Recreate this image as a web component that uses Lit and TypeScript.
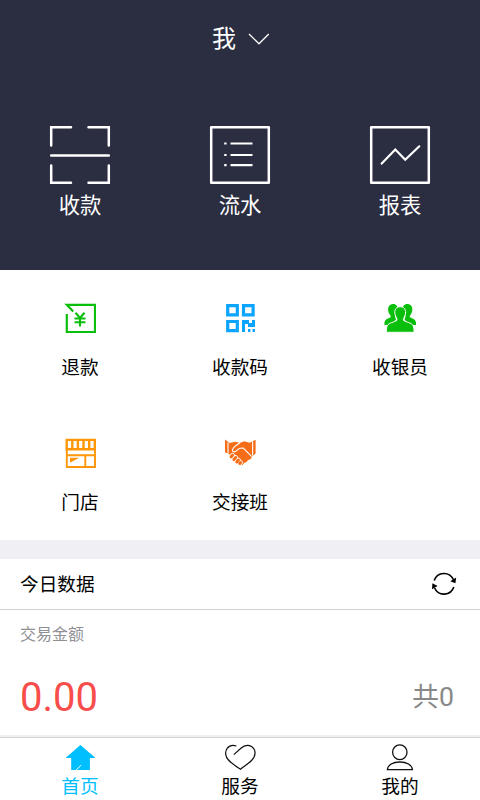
import { LitElement, html, css, svg } from "lit";
import { customElement } from "lit/decorators.js";

const scanIcon = svg`<svg width="62" height="60" viewBox="0 0 62 60" fill="none" stroke="#fff" stroke-width="2.5" stroke-linecap="round">
  <path d="M2.2 20.5V2.2H22M39.5 2.2H59.8V20.5M2.2 40.5V57.8H22M39.5 57.8H59.8V40.5M2.2 30.5H59.8"/></svg>`;
const listIcon = svg`<svg width="62" height="60" viewBox="0 0 62 60" fill="none" stroke="#fff" stroke-width="2.5" stroke-linejoin="round">
  <path d="M2.2 2.2H59.8V57.8H2.2Z"/><path stroke-width="2.2" d="M21.5 18.5H43.5M21.5 30H43.5M21.5 40.2H43.5M15.2 18.5H17.6M15.2 30H17.6M15.2 40.2H17.6"/></svg>`;
const chartIcon = svg`<svg width="62" height="60" viewBox="0 0 62 60" fill="none" stroke="#fff" stroke-width="2.5" stroke-linejoin="round">
  <path d="M2.2 2.2H59.8V57.8H2.2Z"/><path stroke-width="2.2" stroke-linecap="round" stroke-linejoin="miter" d="M12.7 38.6L26.3 24.5L36.2 34.8L50.3 21.3"/></svg>`;

const refundIcon = svg`<svg width="32" height="32" viewBox="0 0 32 32" fill="none" stroke="#0abf0c" stroke-width="2.2">
  <path d="M2.8 12V30H31V2.8H2.8L9.2 9.5"/><path stroke-width="2.1" d="M11.5 10.8L16 16L20.5 10.8M16 16V24.5M10.5 16.5H21.5M10.5 20.2H21.5"/></svg>`;
const qrIcon = svg`<svg width="32" height="32" viewBox="0 0 32 32" fill="none" stroke="#0ba5ff" stroke-width="3.2">
  <path d="M3.7 3.7H13.3V12.9H3.7ZM19.5 3.7H29.1V12.9H19.5ZM3.7 19.5H13.3V28.7H3.7Z"/>
  <path fill="#0ba5ff" stroke="none" d="M18 18H25V21H28V18H31V25H24V22H21V30H18ZM24 27H26.4V30H24ZM28.5 27H31V30H28.5Z"/></svg>`;
const peopleIcon = svg`<svg width="34" height="32" viewBox="0 0 34 32" fill="#0abf0c">
  <path d="M9.5 2C13 1.6 15.2 4.2 14.9 8C14.7 10.5 13 12.5 11.8 14L13 17.5L8 23H1.5C1.1 18.2 3 17.2 7.3 15.5C8.3 15 7.6 13.7 6.6 12.2C4 8.2 4.8 2.6 9.5 2ZM25 2C21.5 1.6 19.3 4.2 19.6 8C19.8 10.5 21.5 12.5 22.7 14L21.5 17.5L26.5 23H33C33.4 18.2 31.5 17.2 27.2 15.5C26.2 15 26.9 13.7 27.9 12.2C30.5 8.2 29.7 2.6 25 2Z"/>
  <path stroke="#fff" stroke-width="1" d="M17.2 4.7C11.6 4.7 10.8 10.2 12.7 14.2C13.5 16 14.3 17 14 18.1C13.3 19.7 7.5 20.2 5 22.6C3.4 24.4 3.4 27.2 3.3 30.3H31.1C31 27.2 31 24.4 29.4 22.6C26.9 20.2 21.1 19.7 20.4 18.1C20.1 17 20.9 16 21.7 14.2C23.6 10.2 22.8 4.7 17.2 4.7Z"/></svg>`;
const storeIcon = svg`<svg width="32" height="32" viewBox="0 0 32 32" fill="none" stroke="#ff9708" stroke-width="2.4">
  <path d="M2.7 2.9H30.8V12.2H2.7ZM8.3 3V12M13.9 3V12M19.5 3V12M25.2 3V12"/><path d="M2.8 12V30H31V12M2 18.3H31M21.3 18V30" stroke-width="1.9"/><path fill="#ff9708" stroke="none" d="M6 20.8H15.3L6 25.8Z"/></svg>`;
const handsIcon = svg`<svg width="34" height="32" viewBox="0 0 34 32">
  <path fill="#f66d18" d="M2 2.5L6.5 6L12.5 4.8L16.8 6L21 4.2L26.8 5.8L32.6 2.7V16.5L28.8 19.5C28.8 22 26.8 22.8 24.9 23C24.4 25 22.8 25.6 21.2 25.8C20.6 27.8 19 29 17.3 28L15.5 21L7 17.8L2 15.3Z"/>
  <path fill="none" stroke="#fff" stroke-width="1.1" d="M5 5.4V17M29.6 4.6V18.6M17 5.8L12 9.2C9.5 11.8 8.6 14 10.4 14.8C13.6 15.4 14.4 11.7 17.2 11.3L20.3 11L28.5 19.3"/>
  <path fill="none" stroke="#fff" stroke-width="4.7" stroke-linecap="round" d="M9.5 18.2L8.1 19.8M12.7 20.5L10.9 22.6M15.4 23L13.8 25M17.6 25.5L16.8 26.5"/>
  <path fill="none" stroke="#f66d18" stroke-width="3" stroke-linecap="round" d="M9.5 18.2L8.1 19.8M12.7 20.5L10.9 22.6M15.4 23L13.8 25M17.6 25.5L16.8 26.5"/></svg>`;

const chevron = svg`<svg width="22" height="14" viewBox="0 0 22 14" fill="none" stroke="#fff" stroke-width="1.3"><path d="M1 2L11 11.8L20.8 2"/></svg>`;
const refresh = svg`<svg width="26" height="26" viewBox="0 0 26 26" fill="none" stroke="#000" stroke-width="1.6">
  <path d="M3.2 9.5A10.3 10.3 0 0 1 22.4 8.8M22.8 16A10.3 10.3 0 0 1 3.6 17"/><path fill="#000" stroke="none" d="M19.3 10.2L25.2 6.5L24.4 12.2ZM1.4 12.2L6.6 15L1 18.2Z"/></svg>`;
const homeIcon = svg`<svg width="32" height="28" viewBox="0 0 32 28"><path fill="#00bfff" d="M16.4 1L31 13.6V14H25.9V26H7.2V14H2V13.6Z"/><path stroke="#fff" stroke-width="1" d="M11.2 27L17.2 21"/></svg>`;
const heartIcon = svg`<svg width="32" height="28" viewBox="0 0 32 28" fill="none" stroke="#111" stroke-width="1.2">
  <path d="M9.8 10.6L17.2 4C21.5-.2 27.5.8 30 5C32.2 9 30.3 13.5 27.5 16.5C24.5 19.7 20 22.3 16.5 25.2C12 22.3 7.5 19.5 4.5 16C1.5 12.8.5 8 3.2 4.3C5.5 1.2 9 .9 12.4 2"/></svg>`;
const userIcon = svg`<svg width="32" height="28" viewBox="0 0 32 28" fill="none" stroke="#111" stroke-width="1.3">
  <ellipse cx="15.8" cy="8.3" rx="7.2" ry="7.4"/><path d="M3.4 25.6C3.8 20.8 9 18 15.8 18S28 20.8 28.4 25.6Z"/></svg>`;

@customElement("app-root")
export class AppRoot extends LitElement {
  static styles = css`
    :host { display: flex; flex-direction: column; height: 800px; box-sizing: border-box; overflow: hidden; background: #fff; color: #000; font-family: "Noto Sans CJK SC", sans-serif; font-size: 18.67px; }
    svg { display: block; }
    .hero { height: 269.5px; flex: none; background: #2b2d41; color: #fff; }
    .account { height: 74px; display: flex; align-items: center; justify-content: center; gap: 12px; padding-left: 2px; font-size: 24px; line-height: 36px; }
    .account svg { margin-top: 3px; }
    .cols { display: grid; grid-template-columns: repeat(3, 1fr); }
    .cell { display: flex; flex-direction: column; align-items: center; }
    .main { padding-top: 51px; font-size: 21.33px; }
    .main .label { line-height: 30px; margin-top: 4px; }
    .services { height: 270.5px; flex: none; grid-auto-rows: 135px; }
    .services .cell { padding-top: 32px; }
    .services .label { line-height: 28px; margin-top: 18px; }
    .gap { height: 19px; flex: none; background: #efeff4; }
    .title { height: 50px; flex: none; display: flex; align-items: center; justify-content: space-between; padding: 0 23px 0 20px; border-bottom: 1px solid #d2d2d2; }
    .title span { line-height: 28px; padding-bottom: 2px; }
    .data { height: 125px; flex: none; }
    .caption { padding: 10px 20px 0; line-height: 26px; font-size: 16px; color: #8f8f94; }
    .values { display: flex; align-items: center; justify-content: space-between; height: 60px; margin-top: 21px; padding: 0 26px 0 20px; }
    .amount { font-family: Roboto, sans-serif; font-size: 40px; color: #f84d4b; }
    .count { font-size: 26.67px; color: #888; line-height: 40px; padding-bottom: 2px; }
    .num { font-family: Roboto, sans-serif; }
    .tabs { flex: 1; margin-top: 2px; border-top: 1px solid #d2d2d2; background: #fff; }
    .bottom { flex: 1; display: flex; flex-direction: column; background: #efeff4; }
    .tabs .cell { padding-top: 6px; }
    .tabs .label { line-height: 28px; margin-top: -1px; }
    .active { color: #00bfff; }
  `;

  private cell(icon: unknown, label: string, active = false) {
    return html`<div class="cell ${active ? "active" : ""}">${icon}<div class="label">${label}</div></div>`;
  }

  render() {
    return html`
      <header class="hero">
        <div class="account"><span>我</span>${chevron}</div>
        <div class="cols main">${this.cell(scanIcon, "收款")}${this.cell(listIcon, "流水")}${this.cell(chartIcon, "报表")}</div>
      </header>
      <section class="cols services">
        ${this.cell(refundIcon, "退款")}${this.cell(qrIcon, "收款码")}${this.cell(peopleIcon, "收银员")}
        ${this.cell(storeIcon, "门店")}${this.cell(handsIcon, "交接班")}
      </section>
      <div class="gap"></div>
      <div class="title"><span>今日数据</span>${refresh}</div>
      <section class="data">
        <div class="caption">交易金额</div>
        <div class="values"><span class="amount">0.00</span><span class="count">共<span class="num">0</span></span></div>
      </section>
      <div class="bottom">
        <nav class="cols tabs">${this.cell(homeIcon, "首页", true)}${this.cell(heartIcon, "服务")}${this.cell(userIcon, "我的")}</nav>
      </div>`;
  }
}
